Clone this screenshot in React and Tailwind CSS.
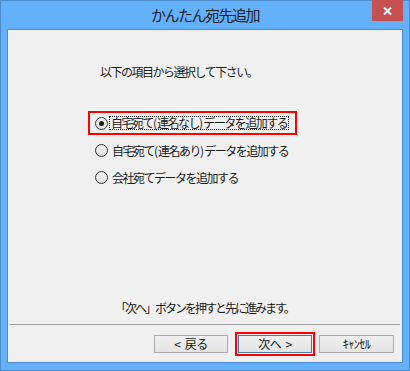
import React from 'react';

const font = { fontFamily: '"Noto Sans CJK JP", "Noto Sans", sans-serif' };

const Radio = ({ checked }) => (
  <span className="relative flex h-[13px] w-[13px] shrink-0 items-center justify-center rounded-full border border-[#333333] bg-gradient-to-b from-[#f4f4f4] to-[#dedede]">
    {checked && <span className="h-[5px] w-[5px] rounded-full bg-[#1a1a1a]" />}
  </span>
);

const Button = ({ children, focused }) => (
  <button
    className={`flex h-[18px] w-full items-center justify-center border bg-gradient-to-b from-[#f0f0f0] to-[#e4e4e4] text-[12px] leading-none tracking-[-0.5px] text-[#1a1a1a] ${
      focused ? 'border-[#3c7fb1] outline-2 outline-offset-1 outline-[#ff0000]' : 'border-[#acacac]'
    }`}
  >
    {children}
  </button>
);

export default function App() {
  return (
    <div style={font} className="flex h-[371px] w-[410px] flex-col border border-[#4a8bcc] bg-[#63b1fb] px-[6px] pb-[7px]">
      {/* title bar */}
      <div className="grid h-[28px] grid-cols-[31px_1fr_31px]">
        <div />
        <div className="pt-[4px] text-center text-[15px] leading-[20px] tracking-[-1.5px] text-[#1e1e1e]">かんたん宛先追加</div>
        <div className="-mt-px flex h-[21px] items-center justify-center bg-[#c75050]">
          <svg width="9" height="8" viewBox="0 0 9 8">
            <path d="M1 0.5 L8 7.5 M8 0.5 L1 7.5" stroke="#ffffff" strokeWidth="2" />
          </svg>
        </div>
      </div>

      {/* client area */}
      <div className="flex flex-1 flex-col border border-[#4a8bcc] bg-[#f0f0f0] text-[12px] tracking-[-1.5px] text-[#1a1a1a]">
        <div className="mt-[34px] h-4 pl-[92px] leading-4">以下の項目から選択して下さい。</div>

        <div className="ml-[80px] mt-[31px] flex flex-col">
          <div className="flex h-[24px] w-[209px] items-center border-2 border-[#ff0000] pl-[5px]">
            <Radio checked />
            <span className="ml-[1px] border border-dotted border-[#222] pr-[1px] pl-[1px] leading-[12px]">自宅宛て<span className="tracking-normal">(</span>連名なし<span className="tracking-normal">)</span>データを追加する</span>
          </div>
          <div className="mt-[2px] flex h-[27px] items-center pl-[7px]">
            <Radio />
            <span className="ml-[4px] leading-4">自宅宛て<span className="tracking-normal">(</span>連名あり<span className="tracking-normal">)</span>データを追加する</span>
          </div>
          <div className="flex h-[27px] items-center pl-[7px]">
            <Radio />
            <span className="ml-[4px] leading-4">会社宛てデータを追加する</span>
          </div>
        </div>

        <div className="flex-1" />

        <div className="h-4 pl-[107px] leading-4 tracking-[-2px]">「次へ」ボタンを押すと先に進みます。</div>
        <div className="mx-[2px] mt-[8px] h-px bg-[#a0a0a0]" />
        <div className="mt-[10px] mb-[9px] flex justify-end pr-[8px]">
          <div className="w-[74px]"><Button>&lt;&nbsp;&nbsp;戻る</Button></div>
          <div className="ml-[10px] w-[74px]"><Button focused>次へ&nbsp;&nbsp;&gt;</Button></div>
          <div className="ml-[7px] w-[75px]"><Button>ｷｬﾝｾﾙ</Button></div>
        </div>
      </div>
    </div>
  );
}
